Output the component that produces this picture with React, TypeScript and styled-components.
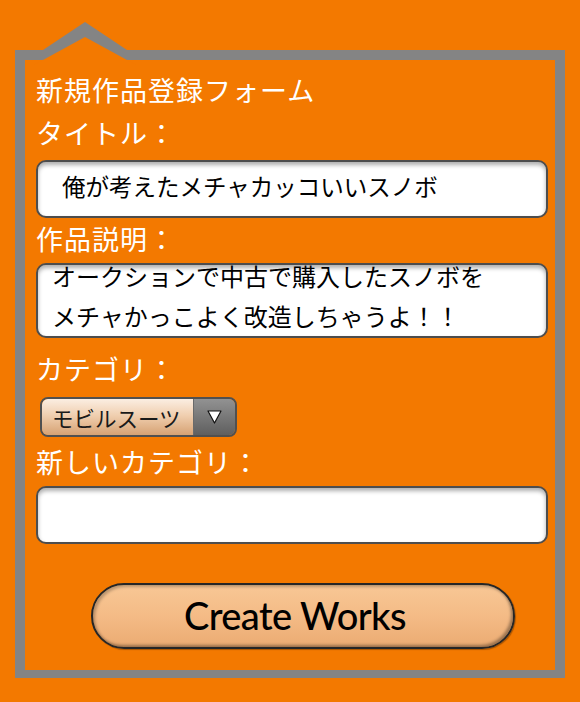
import React, { useLayoutEffect, useRef } from "react";
import styled, { createGlobalStyle } from "styled-components";

const Global = createGlobalStyle`
  html, body {
    margin: 0;
    padding: 0;
    background: #f37900;
  }
  #root {
    min-height: 702px;
  }
`;

const Page = styled.div`
  width: 580px;
  height: 702px;
  box-sizing: border-box;
  padding: 50px 15px 0 15px;
  background: #f37900;
  overflow: hidden;
`;

const Frame = styled.form`
  position: relative;
  box-sizing: border-box;
  width: 550px;
  height: 628px;
  margin: 0;
  border-style: solid;
  border-color: #848484;
  border-width: 10px 10px 8px 10px;
  padding: 13px 7px 0 11px;
  display: flex;
  flex-direction: column;
  align-items: flex-start;
`;

const Roof = styled.svg`
  position: absolute;
  left: -25px;
  top: -60px;
  width: 160px;
  height: 80px;
  pointer-events: none;
`;

const Title = styled.h1`
  margin: 0;
  font-family: "Noto Sans CJK JP", "Noto Sans", sans-serif;
  font-weight: 400;
  font-size: 27px;
  letter-spacing: 1px;
  line-height: 34px;
  color: #ffffff;
  white-space: nowrap;
`;

const Label = styled.label<{ $gap: number }>`
  display: block;
  margin-top: ${(p) => p.$gap}px;
  font-family: "Noto Sans CJK JP", "Noto Sans", sans-serif;
  font-weight: 400;
  font-size: 27px;
  letter-spacing: 1px;
  line-height: 34px;
  color: #ffffff;
  white-space: nowrap;
`;

const fieldBase = `
  box-sizing: border-box;
  width: 512px;
  border: 2px solid #4d4d4d;
  border-radius: 10px;
  background: #ffffff;
  box-shadow: inset 0 3px 4px rgba(0, 0, 0, 0.32);
  font-family: "Noto Sans CJK JP", "Noto Sans", sans-serif;
  font-weight: 400;
  color: #000000;
  outline: none;
  margin-left: 0;
`;

const TextInput = styled.input<{ $gap: number }>`
  ${fieldBase}
  display: block;
  height: 58px;
  margin-top: ${(p) => p.$gap}px;
  padding: 0 10px 6px 24px;
  font-size: 23.5px;
`;

const TextArea = styled.textarea<{ $gap: number }>`
  ${fieldBase}
  display: block;
  height: 75px;
  margin-top: ${(p) => p.$gap}px;
  padding: 0 10px 0 14px;
  font-size: 24px;
  line-height: 40px;
  resize: none;
  overflow: hidden;
`;

const Select = styled.div<{ $gap: number }>`
  box-sizing: border-box;
  display: flex;
  align-items: stretch;
  width: 197px;
  height: 40px;
  margin-top: ${(p) => p.$gap}px;
  margin-left: 4px;
  border: 2px solid #505050;
  border-radius: 8px;
  overflow: hidden;
`;

const SelectValue = styled.div`
  flex: 1;
  display: flex;
  align-items: center;
  padding-left: 10px;
  background: linear-gradient(#fbeee2 0%, #f0cfb0 45%, #d6a273 100%);
  font-family: "Noto Sans CJK JP", "Noto Sans", sans-serif;
  font-size: 21.5px;
  color: #1a1a1a;
  white-space: nowrap;
`;

const SelectArrow = styled.div`
  width: 41px;
  display: flex;
  align-items: center;
  justify-content: center;
  border-left: 1px solid #6a6a6a;
  background: linear-gradient(#929292 0%, #787878 50%, #5f5f5f 100%);
`;

const SubmitButton = styled.button<{ $gap: number }>`
  box-sizing: border-box;
  width: 424px;
  height: 66px;
  margin-top: ${(p) => p.$gap}px;
  margin-left: 55px;
  padding: 0 16px 2px 0;
  border: 2px solid #262626;
  border-radius: 33px;
  background: linear-gradient(#f8c795 0%, #f4bb86 50%, #ebab72 100%);
  box-shadow: inset -2px -2px 3px rgba(0, 0, 0, 0.35),
    inset 2px 2px 3px rgba(0, 0, 0, 0.25), 1px 1px 1px rgba(0, 0, 0, 0.3);
  font-family: "Lato", "Open Sans", sans-serif;
  font-weight: 500;
  font-size: 38px;
  letter-spacing: -0.6px;
  color: #000000;
  cursor: pointer;
`;

export default function App() {
  const areaRef = useRef<HTMLTextAreaElement>(null);
  useLayoutEffect(() => {
    if (areaRef.current) areaRef.current.scrollTop = 9;
  }, []);

  return (
    <>
      <Global />
      <Page>
        <Frame onSubmit={(e) => e.preventDefault()}>
          <Roof viewBox="0 0 160 80">
            <polygon points="85,22 130,52 40,52" fill="#848484" />
            <polygon points="85,37 138,66 32,66" fill="#f37900" />
          </Roof>
          <Title>新規作品登録フォーム</Title>
          <Label $gap={9}>タイトル：</Label>
          <TextInput
            $gap={10}
            type="text"
            readOnly
            value="俺が考えたメチャカッコいいスノボ"
          />
          <Label $gap={4}>作品説明：</Label>
          <TextArea
            ref={areaRef}
            $gap={7}
            readOnly
            value={"オークションで中古で購入したスノボを\nメチャかっこよく改造しちゃうよ！！"}
          />
          <Label $gap={14}>カテゴリ：</Label>
          <Select $gap={11}>
            <SelectValue>モビルスーツ</SelectValue>
            <SelectArrow>
              <svg width="15" height="14" viewBox="0 0 15 14">
                <polygon
                  points="1,1 14,1 7.5,13"
                  fill="#ffffff"
                  stroke="#111111"
                  strokeWidth="1.2"
                  strokeLinejoin="round"
                />
              </svg>
            </SelectArrow>
          </Select>
          <Label $gap={8}>新しいカテゴリ：</Label>
          <TextInput $gap={7} type="text" readOnly value="" />
          <SubmitButton $gap={39} type="submit">
            Create Works
          </SubmitButton>
        </Frame>
      </Page>
    </>
  );
}
